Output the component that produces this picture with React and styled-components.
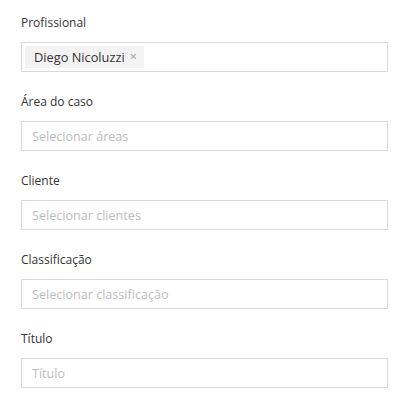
import React from "react";
import styled, { createGlobalStyle } from "styled-components";

const Global = createGlobalStyle`
  html, body { margin: 0; padding: 0; background: #fff; }
  body { font-family: "Segoe UI", "Open Sans", "Noto Sans", sans-serif; }
`;

const Form = styled.div`
  display: flex;
  flex-direction: column;
  gap: 20px;
  padding: 13px 25px 0 21px;
  width: 367px;
`;

const Field = styled.div`
  display: flex;
  flex-direction: column;
  gap: 9px;
`;

const Label = styled.label`
  font-size: 12px;
  line-height: 20px;
  height: 20px;
  color: #333;
`;

const Box = styled.div`
  box-sizing: border-box;
  height: 30px;
  border: 1px solid #d9d9d9;
  background: #fff;
  display: flex;
  align-items: center;
  padding: 0 ${(p) => (p.$multi ? 3 : 10)}px;
  font-size: 12.6px;
  color: #bdbdbd;
`;

const Tag = styled.span`
  display: inline-flex;
  align-items: center;
  gap: 5px;
  height: 22px;
  padding: 0 7px 0 9px;
  background: #f3f3f3;
  color: #333;
  font-size: 12.8px;
`;

const Close = styled.span`
  color: #999;
  font-size: 12.5px;
  line-height: 1;
`;

export default function App() {
  return (
    <>
      <Global />
      <Form>
        <Field>
          <Label>Profissional</Label>
          <Box $multi>
            <Tag>
              Diego Nicoluzzi <Close>×</Close>
            </Tag>
          </Box>
        </Field>
        <Field>
          <Label>Área do caso</Label>
          <Box>Selecionar áreas</Box>
        </Field>
        <Field>
          <Label>Cliente</Label>
          <Box>Selecionar clientes</Box>
        </Field>
        <Field>
          <Label>Classificação</Label>
          <Box>Selecionar classificação</Box>
        </Field>
        <Field>
          <Label>Título</Label>
          <Box>Título</Box>
        </Field>
      </Form>
    </>
  );
}
